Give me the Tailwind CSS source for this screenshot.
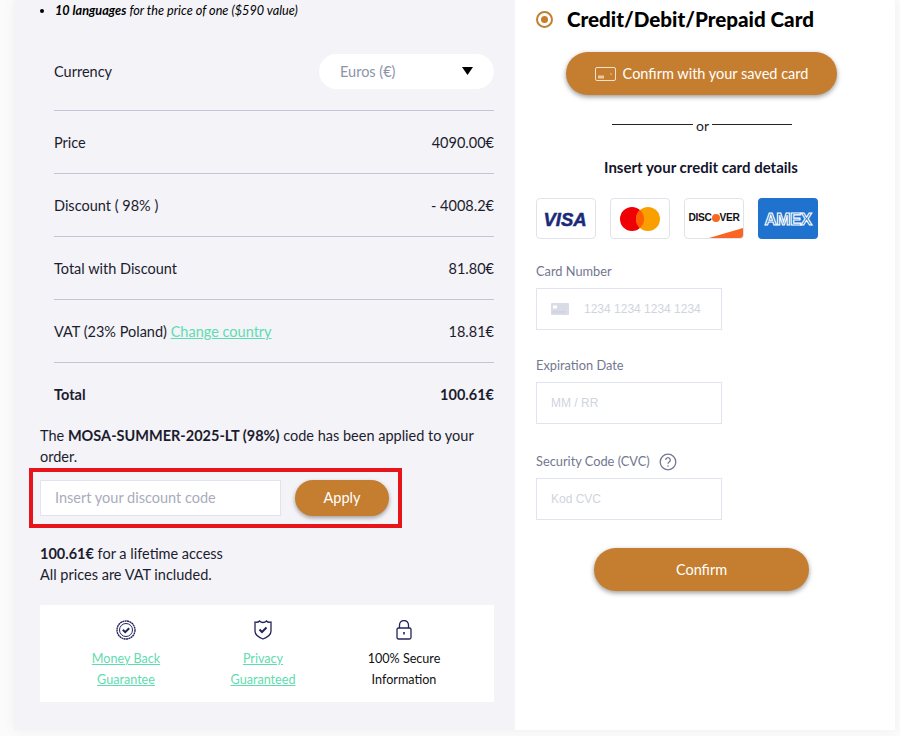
<!DOCTYPE html>
<html lang="en">
<head>
    <meta charset="UTF-8">
    <meta name="viewport" content="width=device-width, initial-scale=1.0">
    <script src="https://cdn.jsdelivr.net/npm/@tailwindcss/browser@4"></script>
    <title>Checkout</title>
</head>
<body class="bg-[#fbfbfb] h-[736px] w-[900px] overflow-hidden font-['Lato',sans-serif] text-[#14142b]">
    <div class="flex ml-[14px] w-[881px] h-[730px] items-start shadow-[0_0_12px_rgba(0,0,0,0.05)]">
        <!-- order summary -->
        <div class="w-[501px] h-[730px] bg-[#f3f3f8] pl-[26px] pr-[21px]">
            <ul class="h-[54px] pt-[2px] pl-[15px] list-disc text-[12.7px] leading-[16px] italic text-black">
                <li><b class="font-bold">10 languages</b> for the price of one ($590 value)</li>
            </ul>
            <div class="pl-[14px] text-[14.5px] text-[#1c1c2e]">
                <div class="flex items-center justify-between h-[57px] pb-[21px] border-b border-[#c3c6d6]">
                    <span>Currency</span>
                    <div class="flex items-center justify-between w-[175px] h-[35px] -mt-[1px] pt-[2px] pl-[21px] pr-[21px] rounded-full bg-white text-[#8e92a8]">
                        <span>Euros (€)</span>
                        <svg width="11" height="8" viewBox="0 0 11 8" class="mb-[3px]"><path d="M0 0H11L5.5 8Z" fill="#000"/></svg>
                    </div>
                </div>
                <div class="flex items-center justify-between h-[63px] pt-[2px] border-b border-[#c3c6d6]"><span>Price</span><span>4090.00€</span></div>
                <div class="flex items-center justify-between h-[63px] pt-[2px] border-b border-[#c3c6d6]"><span>Discount ( 98% )</span><span>- 4008.2€</span></div>
                <div class="flex items-center justify-between h-[63px] pt-[1px] border-b border-[#c3c6d6]"><span>Total with Discount</span><span>81.80€</span></div>
                <div class="flex items-center justify-between h-[63px] pt-[1px] border-b border-[#c3c6d6]"><span>VAT (23% Poland) <a class="text-[#5fdcb0] underline">Change country</a></span><span>18.81€</span></div>
                <div class="flex items-center justify-between h-[63px] font-bold"><span>Total</span><span>100.61€</span></div>
            </div>
            <p class="-mt-[1px] text-[14.5px] leading-[21px] text-[#1c1c2e]">The <b class="font-bold">MOSA-SUMMER-2025-LT (98%)</b> code has been applied to your order.</p>
            <div class="-ml-[11px] mt-[1px] flex items-center w-[373px] h-[60px] pl-[7px] border-4 border-[#e8141c]">
                <div class="w-[241px] h-[36px] flex items-center pl-[14px] bg-white border border-[#e1e3ee] text-[14.5px] text-[#a9acbc]">Insert your discount code</div>
                <div class="ml-[14px] w-[94px] h-[36px] flex items-center justify-center rounded-full bg-[#c57e30] text-white text-[14.5px] shadow-[0_2px_4px_rgba(0,0,0,0.35)]">Apply</div>
            </div>
            <p class="mt-[15px] text-[14.5px] leading-[21px] text-[#1c1c2e]"><b class="font-bold">100.61€</b> for a lifetime access<br>All prices are VAT included.</p>
            <div class="mt-[20px] w-[454px] h-[97px] bg-white flex text-[12.6px] leading-[20.5px] text-center">
                <div class="w-[172px] flex flex-col items-center pt-[15px]">
                    <svg width="20" height="20" viewBox="0 0 20 20" fill="none" stroke="#24245c"><circle cx="10" cy="10" r="9" stroke-width="1.4" stroke-dasharray="2 .4"/><circle cx="10" cy="10" r="6.5" stroke-width="1"/><path d="M6.8 9.800l2.400 2.400 4-4" stroke-width="2"/></svg>
                    <a class="mt-[9px] text-[#5fdcb0] underline">Money Back<br>Guarantee</a>
                </div>
                <div class="w-[102px] flex flex-col items-center pt-[15px]">
                    <svg width="18" height="20" viewBox="0 0 18 20" fill="none" stroke="#24245c" stroke-width="1.3"><path d="M1 2c2 .6 3.400.3 4.500-1 1 1 2.300 1.500 3.500 1.500S11.500 2 12.500 1c1.100 1.300 2.500 1.600 4.500 1v9c0 3.500-4 6.500-8 8-4-1.500-8-4.500-8-8z"/><path d="M5.500 9.500l2.500 2.500 4.500-4.500" stroke-width="2"/></svg>
                    <a class="mt-[9px] text-[#5fdcb0] underline whitespace-nowrap">Privacy<br>Guaranteed</a>
                </div>
                <div class="w-[180px] flex flex-col items-center pt-[15px]">
                    <svg width="16" height="20" viewBox="0 0 16 20" fill="none" stroke="#24245c" stroke-width="1.3"><rect x="1" y="8" width="14" height="11" rx="1.500"/><path d="M3.500 8V5a4.500 4.500 0 0 1 9 0v3"/><path d="M8 12v2.500" stroke-width="1.600"/></svg>
                    <span class="mt-[9px] text-[#111]">100% Secure<br>Information</span>
                </div>
            </div>
        </div>
        <!-- card form -->
        <div class="w-[380px] h-[730px] bg-white pl-[21px] relative">
            <div class="flex items-center h-[38px]">
                <span class="w-[17px] h-[17px] rounded-full border-2 border-[#c57e30] flex items-center justify-center"><span class="w-[7px] h-[7px] rounded-full bg-[#c57e30]"></span></span>
                <h2 class="ml-[14px] text-[20.6px] font-black text-black">Credit/Debit/Prepaid Card</h2>
            </div>
            <div class="ml-[30px] mt-[14px] w-[271px] h-[43px] flex items-center justify-center rounded-full bg-[#c57e30] text-white text-[14.5px] shadow-[0_2px_5px_rgba(0,0,0,0.4)]">
                <svg width="21" height="14" viewBox="0 0 21 14" fill="none" class="mr-[7px]"><rect x=".5" y=".5" width="20" height="13" rx="1.500" stroke="#f4e2cf"/><rect x="3" y="8.500" width="6" height="3" fill="#e8c8a6"/><circle cx="16" cy="7" r=".7" fill="#f4e2cf"/></svg>
                Confirm with your saved card
            </div>
            <div class="ml-[76px] mt-[20px] w-[180px] flex items-center justify-between h-[18px] text-[14px] text-[#1c1c2e]">
                <span class="w-[81px] h-px bg-[#222]"></span><span class="leading-none mt-[3px]">or</span><span class="w-[80px] h-px bg-[#222]"></span>
            </div>
            <p class="ml-[30px] mt-[24px] w-[270px] text-center text-[15px] leading-[20px] font-bold text-[#14142b]">Insert your credit card details</p>
            <div class="mt-[21px] flex gap-[14px]">
                <div class="w-[60px] h-[41px] rounded-[4px] border border-[#e1e3ea] flex items-center justify-center">
                    <svg width="54" height="30" viewBox="0 0 54 30"><text x="26" y="21.500" text-anchor="middle" font-family="Liberation Sans" font-size="18.500" font-weight="700" font-style="italic" fill="#1a2a78" stroke="#1a2a78" stroke-width=".5">VISA</text></svg>
                </div>
                <div class="w-[60px] h-[41px] rounded-[4px] border border-[#e1e3ea] flex items-center justify-center">
                    <svg width="40" height="24" viewBox="0 0 40 24"><circle cx="12" cy="12" r="12" fill="#ee0005"/><circle cx="28" cy="12" r="12" fill="#f9a000"/><path d="M20 3a12 12 0 0 1 0 18a12 12 0 0 1 0-18z" fill="#ff5f00"/></svg>
                </div>
                <div class="w-[60px] h-[41px] rounded-[4px] border border-[#e1e3ea] relative overflow-hidden flex items-center justify-center">
                    <span class="font-['Liberation_Sans',sans-serif] text-[10.2px] font-bold tracking-[-0.3px] text-[#111] flex items-center pb-[1px]">DISC<span class="w-[8px] h-[8px] rounded-full bg-[#f6681f] inline-block"></span>VER</span>
                    <svg width="34" height="10" viewBox="0 0 34 10" class="absolute right-0 bottom-0"><path d="M0 10L34 0V10Z" fill="#fb6524"/></svg>
                </div>
                <div class="w-[60px] h-[41px] rounded-[4px] bg-[#1f72cd] flex items-center justify-center">
                    <svg width="56" height="30" viewBox="0 0 56 30"><text x="28" y="21" text-anchor="middle" font-family="Liberation Sans" font-size="17" font-weight="700" fill="#1f72cd" stroke="#fff" stroke-width="1.100" letter-spacing="-.5">AMEX</text></svg>
                </div>
            </div>
            <label class="block mt-[24px] h-[17px] text-[12.800px] leading-[17px] text-[#73778f]">Card Number</label>
            <div class="mt-[8px] w-[186px] h-[42px] border border-[#e1e3ee] flex items-center pl-[14px] font-['Liberation_Sans',sans-serif] text-[12px] text-[#d0d4de]">
                <svg width="18" height="12" viewBox="0 0 18 12" class="mr-[15px]"><rect width="18" height="12" rx="1" fill="#d9dce6"/><rect x="2" y="2.500" width="4" height="3" fill="#fff"/><path d="M2 9h13" stroke="#bfc3d0" stroke-dasharray="2 1"/></svg>
                1234 1234 1234 1234
            </div>
            <label class="block mt-[27px] h-[17px] text-[12.800px] leading-[17px] text-[#73778f]">Expiration Date</label>
            <div class="mt-[8px] w-[186px] h-[42px] border border-[#e1e3ee] flex items-center pl-[14px] font-['Liberation_Sans',sans-serif] text-[12px] text-[#d0d4de]">MM / RR</div>
            <div class="mt-[29px] h-[17px] flex items-center text-[12.800px] text-[#73778f]">
                <label>Security Code (CVC)</label>
                <svg width="18" height="18" viewBox="0 0 18 18" fill="none" class="ml-[9px]"><circle cx="9" cy="9" r="7.800" stroke="#73778f" stroke-width="1.300"/><path d="M6.700 7a2.300 2.300 0 1 1 3.500 2c-.8.500-1.200.9-1.200 1.800" stroke="#73778f" stroke-width="1.300"/><circle cx="9" cy="13" r=".8" fill="#73778f"/></svg>
            </div>
            <div class="mt-[8px] w-[186px] h-[42px] border border-[#e1e3ee] flex items-center pl-[14px] font-['Liberation_Sans',sans-serif] text-[12px] text-[#d0d4de]">Kod CVC</div>
            <div class="ml-[58px] mt-[28px] w-[215px] h-[43px] flex items-center justify-center rounded-full bg-[#c57e30] text-white text-[14.500px] shadow-[0_2px_5px_rgba(0,0,0,0.4)]">Confirm</div>
        </div>
    </div>
</body>
</html>
